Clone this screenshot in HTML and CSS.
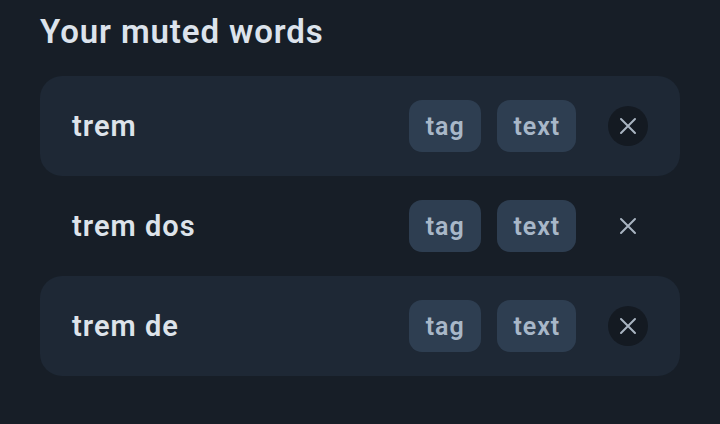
FILE: index.html
```html
<!DOCTYPE html>
<html>
<head>
<meta charset="utf-8">
<link rel="stylesheet" href="styles.css">
</head>
<body>
<div class="page">
  <h1 class="title">Your muted words</h1>
  <div class="list">
    <div class="row row-active">
      <span class="word">trem</span>
      <div class="chips"><span class="chip">tag</span><span class="chip">text</span></div>
      <button class="close close-filled"><svg width="18" height="18" viewBox="0 0 18 18"><path d="M2 2L16 16M16 2L2 16" stroke="currentColor" stroke-width="2" stroke-linecap="round"/></svg></button>
    </div>
    <div class="row">
      <span class="word">trem dos</span>
      <div class="chips"><span class="chip">tag</span><span class="chip">text</span></div>
      <button class="close"><svg width="18" height="18" viewBox="0 0 18 18"><path d="M2 2L16 16M16 2L2 16" stroke="currentColor" stroke-width="2" stroke-linecap="round"/></svg></button>
    </div>
    <div class="row row-active">
      <span class="word">trem de</span>
      <div class="chips"><span class="chip">tag</span><span class="chip">text</span></div>
      <button class="close close-filled"><svg width="18" height="18" viewBox="0 0 18 18"><path d="M2 2L16 16M16 2L2 16" stroke="currentColor" stroke-width="2" stroke-linecap="round"/></svg></button>
    </div>
  </div>
</div>
</body>
</html>
```
FILE: styles.css
```css
html, body {
  margin: 0;
  padding: 0;
  background: #171e27;
  width: 720px;
  height: 424px;
  overflow: hidden;
}
.page {
  padding: 10px 40px 0 40px;
  font-family: Roboto, "Noto Sans", sans-serif;
}
.title {
  margin: 0 0 22px 0;
  font-size: 33px;
  font-weight: 600;
  line-height: 44px;
  letter-spacing: 0.9px;
  color: #dce3ec;
}
.list {
  display: flex;
  flex-direction: column;
}
.row {
  display: flex;
  align-items: center;
  height: 100px;
  padding: 0 32px;
  border-radius: 22px;
}
.row-active {
  background: #1e2835;
}
.word {
  flex: 1;
  font-size: 29px;
  font-weight: 600;
  letter-spacing: 1px;
  color: #dde3ea;
}
.chips {
  display: flex;
  gap: 16px;
}
.chip {
  display: flex;
  align-items: center;
  justify-content: center;
  height: 52px;
  padding: 0 16px 0 17px;
  border-radius: 13px;
  background: #2e3e51;
  color: #a8b7c8;
  font-size: 25px;
  font-weight: 600;
  letter-spacing: 0.9px;
}
.close {
  margin-left: 32px;
  width: 40px;
  height: 40px;
  border: none;
  border-radius: 50%;
  background: transparent;
  color: #a9b4c1;
  display: flex;
  align-items: center;
  justify-content: center;
  padding: 0;
}
.close-filled {
  background: #141a22;
}
```
